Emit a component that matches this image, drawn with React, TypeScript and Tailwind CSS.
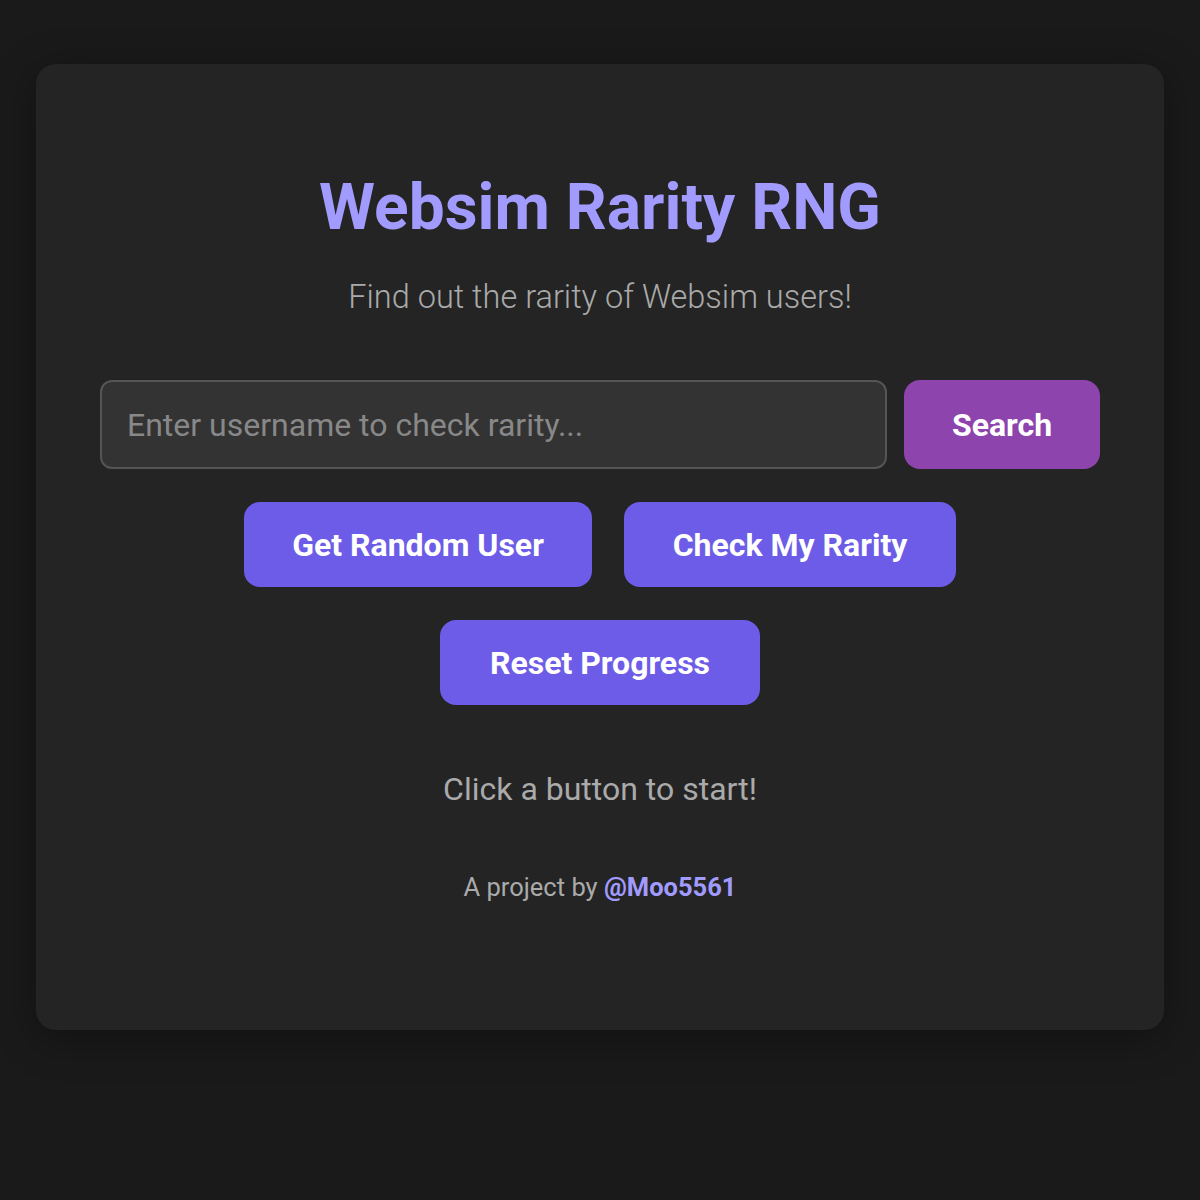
import React from 'react';

const App: React.FC = () => {
  return (
    <div className="min-h-[1200px] bg-[#1a1a1a] px-[36px] pt-[64px] font-['Roboto',sans-serif]">
      <div className="flex flex-col items-center rounded-[20px] bg-[#242424] px-[64px] pt-[106px] pb-[127px] shadow-[0_8px_40px_rgba(0,0,0,0.35)]">
        <h1 className="text-[64px] font-bold leading-[76px] text-[#a29bfe]">Websim Rarity RNG</h1>
        <p className="mt-[33px] text-[32.5px] font-light leading-[36px] text-[#aaaaaa]">
          Find out the rarity of Websim users!
        </p>

        <div className="mt-[65px] flex w-full gap-[17px]">
          <input
            type="text"
            placeholder="Enter username to check rarity..."
            className="h-[89px] flex-1 rounded-[12px] border-2 border-[#555555] bg-[#333333] px-[25px] text-[32px] text-white placeholder:text-[#888888] outline-none"
          />
          <button className="h-[89px] w-[196px] rounded-[16px] bg-[#8e44ad] text-[32px] font-bold text-white">
            Search
          </button>
        </div>

        <div className="mt-[33px] flex gap-[32px]">
          <button className="h-[85px] w-[348px] rounded-[16px] bg-[#6c5ce7] text-[32px] font-bold text-white">
            Get Random User
          </button>
          <button className="h-[85px] w-[332px] rounded-[16px] bg-[#6c5ce7] text-[32px] font-bold text-white">
            Check My Rarity
          </button>
        </div>
        <button className="mt-[33px] h-[85px] w-[320px] rounded-[16px] bg-[#6c5ce7] text-[32px] font-bold text-white">
          Reset Progress
        </button>

        <p className="mt-[65px] text-[32px] leading-[38px] text-[#aaaaaa]">Click a button to start!</p>

        <p className="mt-[64px] text-[25.5px] leading-[31px] text-[#aaaaaa]">
          A project by <a className="font-bold text-[#a29bfe]">@Moo5561</a>
        </p>
      </div>
    </div>
  );
};

export default App;
